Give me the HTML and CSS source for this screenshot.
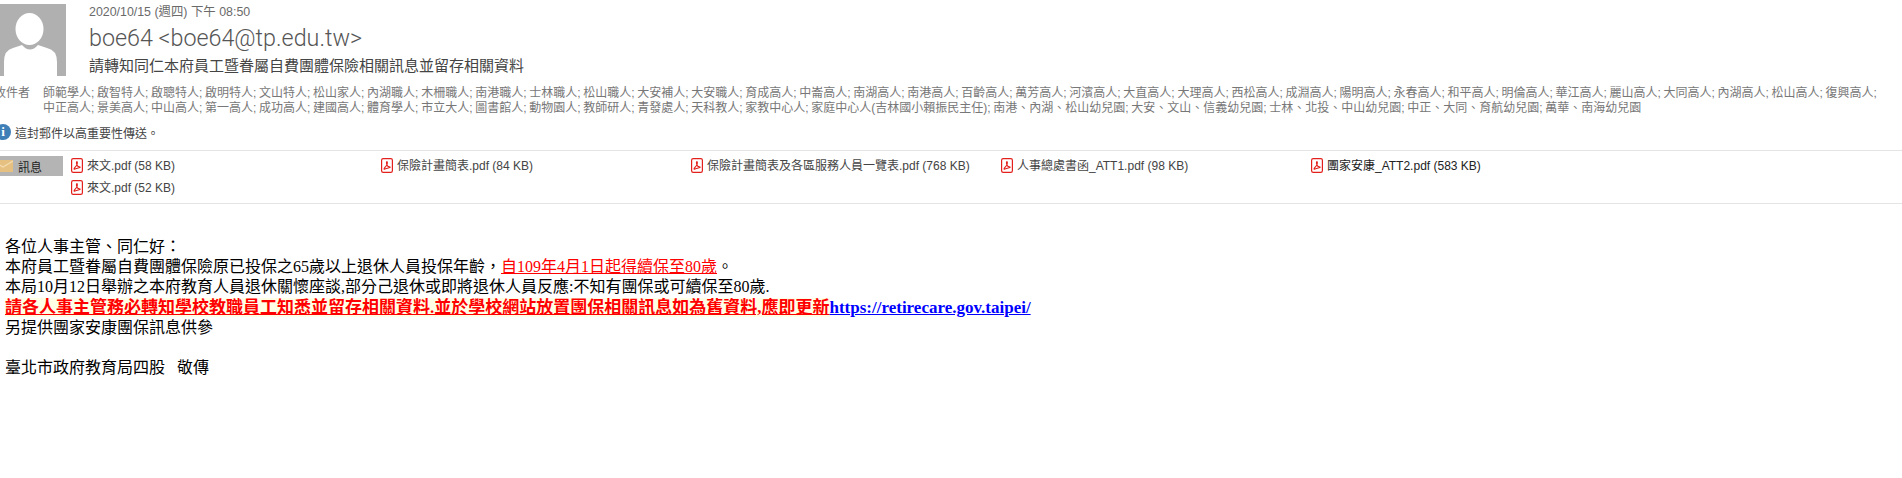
FILE: index.html
```html
<!DOCTYPE html>
<html lang="zh-Hant">

<head>
    <meta charset="UTF-8">
    <title>請轉知同仁本府員工暨眷屬自費團體保險相關訊息並留存相關資料</title>
    <link rel="stylesheet" href="styles.css">
</head>

<body>

    <svg width="0" height="0" class="defs">
        <symbol id="pdf" viewBox="0 0 12 15">
            <rect x=".6" y=".6" width="10.8" height="13.8" rx="1.6" fill="#fff" stroke="#e2201c" stroke-width="1.2"/>
            <path d="M5.8 3.6Q4.9 4.4 5.9 7L3.2 10.4Q2.6 11.6 3.9 11L8.8 9.6Q9.8 8.8 8.2 8.9Q6.6 8.6 5.9 7Q6.9 4 5.8 3.6Z" fill="none" stroke="#e2201c" stroke-width="1.1"/>
        </symbol>
    </svg>

    <!-- Message header -->
    <div class="header">
        <svg class="avatar" viewBox="0 0 66 72">
            <rect width="66" height="72" fill="#b0b0b0"/>
            <ellipse cx="29.5" cy="25" rx="14" ry="16" fill="#fff"/>
            <path d="M4 72V58Q4 46 13 44Q19 42 22 41Q30 50 38 41Q41 42 47 44Q57 46 57 58V72Z" fill="#fff"/>
        </svg>
        <div class="meta">
            <div class="date">2020/10/15 (週四) 下午 08:50</div>
            <div class="sender">boe64 &lt;boe64@tp.edu.tw&gt;</div>
            <div class="subject">請轉知同仁本府員工暨眷屬自費團體保險相關訊息並留存相關資料</div>
        </div>
    </div>

    <div class="recipients">
        <span class="to-label">收件者</span>
        <div class="to-list">
            <div>師範學人; 啟智特人; 啟聰特人; 啟明特人; 文山特人; 松山家人; 內湖職人; 木柵職人; 南港職人; 士林職人; 松山職人; 大安補人; 大安職人; 育成高人; 中崙高人; 南湖高人; 南港高人; 百齡高人; 萬芳高人; 河濱高人; 大直高人; 大理高人; 西松高人; 成淵高人; 陽明高人; 永春高人; 和平高人; 明倫高人; 華江高人; 麗山高人; 大同高人; 內湖高人; 松山高人; 復興高人;</div>
            <div>中正高人; 景美高人; 中山高人; 第一高人; 成功高人; 建國高人; 體育學人; 市立大人; 圖書館人; 動物園人; 教師研人; 青發處人; 天科教人; 家教中心人; 家庭中心人(吉林國小賴振民主任); 南港、內湖、松山幼兒園; 大安、文山、信義幼兒園; 士林、北投、中山幼兒園; 中正、大同、育航幼兒園; 萬華、南海幼兒園</div>
        </div>
    </div>

    <div class="notice">
        <span class="info-icon">i</span>
        <span>這封郵件以高重要性傳送。</span>
    </div>

    <!-- Attachments -->
    <div class="attachments">
        <div class="msg-tab">
            <svg class="mail" viewBox="0 0 20 12">
                <rect width="20" height="12" fill="#e6c080"/>
                <path d="M0 1L10 7L20 1" fill="none" stroke="#f3dcb0" stroke-width="1.2"/>
            </svg>
            <span>訊息</span>
        </div>
        <div class="files">
            <div class="file"><svg class="pdf-icon"><use href="#pdf"/></svg>來文.pdf (58 KB)</div>
            <div class="file"><svg class="pdf-icon"><use href="#pdf"/></svg>保險計畫簡表.pdf (84 KB)</div>
            <div class="file"><svg class="pdf-icon"><use href="#pdf"/></svg>保險計畫簡表及各區服務人員一覽表.pdf (768 KB)</div>
            <div class="file"><svg class="pdf-icon"><use href="#pdf"/></svg>人事總處書函_ATT1.pdf (98 KB)</div>
            <div class="file"><svg class="pdf-icon"><use href="#pdf"/></svg>團家安康_ATT2.pdf (583 KB)</div>
            <div class="file"><svg class="pdf-icon"><use href="#pdf"/></svg>來文.pdf (52 KB)</div>
        </div>
    </div>

    <!-- Message body -->
    <div class="content">
        <p>各位人事主管、同仁好：</p>
        <p>本府員工暨眷屬自費團體保險原已投保之65歲以上退休人員投保年齡，<span class="red-link">自109年4月1日起得續保至80歲</span>。</p>
        <p>本局10月12日舉辦之本府教育人員退休關懷座談,部分己退休或即將退休人員反應:不知有團保或可續保至80歲.</p>
        <p><strong class="urgent">請各人事主管務必轉知學校教職員工知悉並留存相關資料.並於學校網站放置團保相關訊息如為舊資料,應即更新</strong><a class="url" href="#">https://retirecare.gov.taipei/</a></p>
        <p>另提供團家安康團保訊息供參</p>
        <p>&nbsp;</p>
        <p>臺北市政府教育局四股&nbsp;&nbsp; 敬傳</p>
    </div>

</body>

</html>
```

FILE: styles.css
```css
* {
    margin: 0;
    padding: 0;
    box-sizing: border-box;
}

html, body {
    height: 100%;
    overflow: hidden;
}

body {
    background-color: #fff;
    font-family: "Liberation Sans", "Noto Sans CJK TC", sans-serif;
    color: #444;
}

.defs {
    display: block;
    height: 0;
}

.header {
    display: flex;
    gap: 23px;
    padding-top: 4px;
    height: 86px;
}

.avatar {
    width: 66px;
    height: 72px;
    flex: none;
}

.meta {
    white-space: nowrap;
}

.date {
    font-size: 12.4px;
    line-height: 16px;
    color: #6a6a6a;
}

.sender {
    font-family: Roboto, "Liberation Sans", sans-serif;
    font-weight: 300;
    font-size: 23.3px;
    line-height: 32px;
    margin-top: 2px;
    color: #555;
}

.subject {
    font-size: 15px;
    line-height: 20px;
    margin-top: 2px;
    color: #444;
}

.recipients {
    display: flex;
    height: 37px;
    font-size: 12px;
    line-height: 15px;
    word-spacing: -0.65px;
    color: #777;
    white-space: nowrap;
}

.to-label {
    margin-left: -6px;
    width: 49px;
    flex: none;
}

.notice {
    display: flex;
    align-items: center;
    gap: 4px;
    height: 18px;
    font-size: 12px;
    color: #444;
}

.info-icon {
    width: 16px;
    height: 16px;
    margin-left: -5px;
    flex: none;
    border-radius: 50%;
    background-color: #3f7fb8;
    color: #fff;
    font: bold 13px/16px "Liberation Serif", serif;
    text-align: center;
}

.attachments {
    display: flex;
    height: 54px;
    margin-top: 9px;
    padding-top: 5px;
    border-top: 1px solid #e4e4e4;
    border-bottom: 1px solid #e4e4e4;
}

.msg-tab {
    display: flex;
    align-items: center;
    gap: 5px;
    width: 63px;
    height: 20px;
    flex: none;
    background-color: #b4b4b4;
    font-size: 12px;
    color: #222;
}

/* envelope runs off the left edge of the window */
.mail {
    width: 20px;
    height: 12px;
    margin-left: -7px;
    flex: none;
}

.files {
    display: grid;
    grid-template-columns: repeat(5, 310px);
    grid-auto-rows: 22px;
    margin-left: 8px;
}

.file {
    display: flex;
    align-items: flex-start;
    gap: 4px;
    font-size: 12px;
    line-height: 20px;
    color: #444;
    white-space: nowrap;
}

.file:nth-child(5) {
    color: #222;
}

.pdf-icon {
    width: 12px;
    height: 15px;
    margin-top: 2px;
    flex: none;
}

.content {
    padding: 33px 0 0 5px;
    font-family: "Liberation Serif", "Noto Sans CJK TC", serif;
    font-size: 16px;
    line-height: 20.2px;
    color: #000;
    white-space: nowrap;
}

.red-link {
    color: #f00;
    text-decoration: underline;
}

.urgent {
    font-size: 17px;
    color: #f00;
    background-color: #ffffe6;
    text-decoration: underline;
}

.url {
    font-size: 17px;
    color: #00f;
    font-weight: bold;
    text-decoration: underline;
}
```
